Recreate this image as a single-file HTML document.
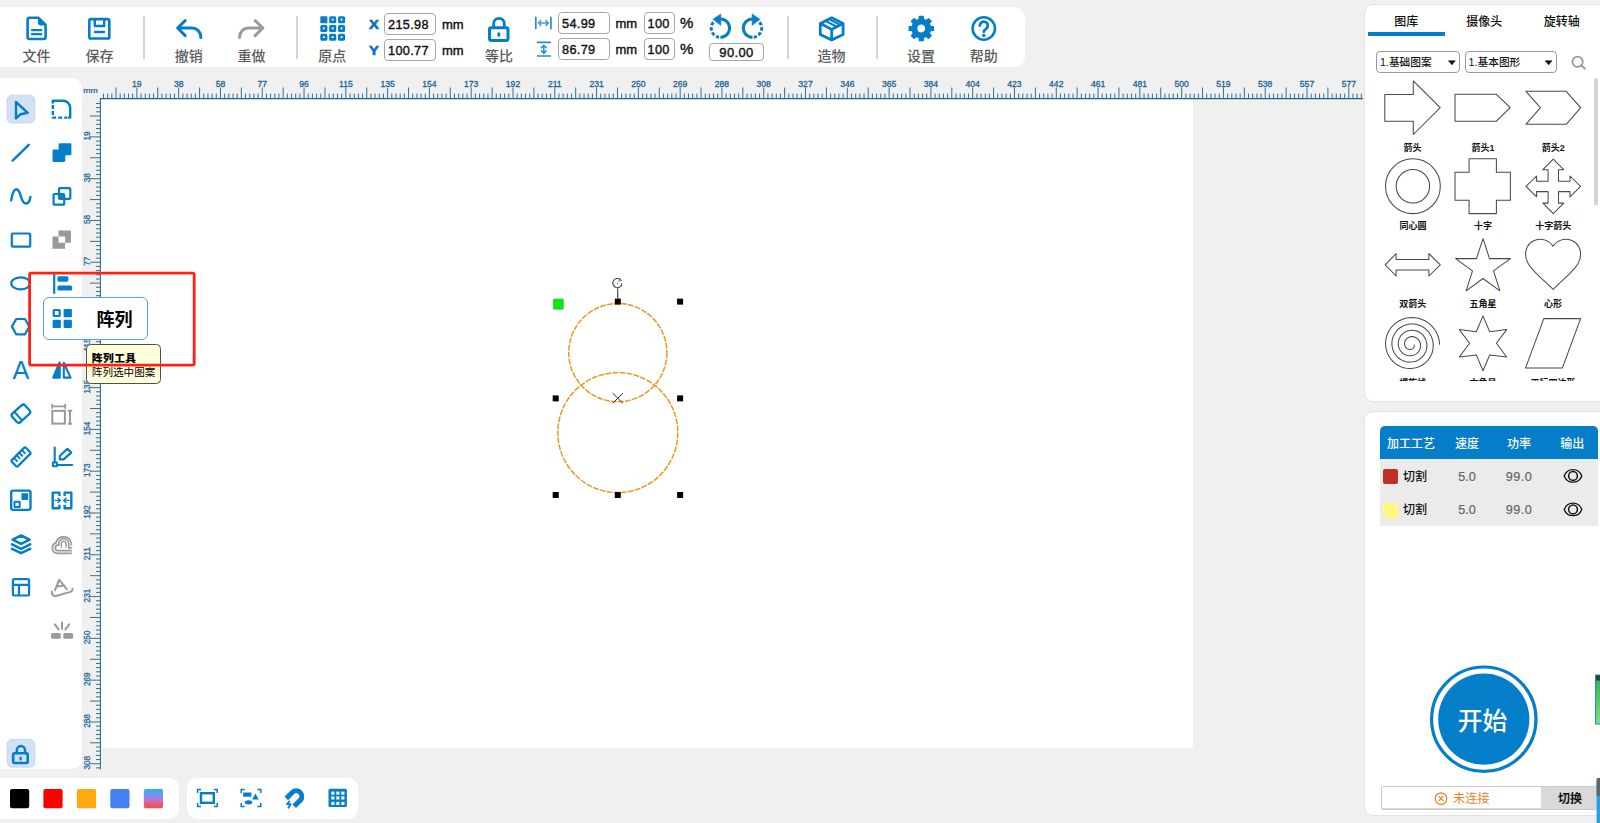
<!DOCTYPE html>
<html lang="zh"><head><meta charset="utf-8"><title>激光雕刻软件</title>
<style>
html,body{margin:0;padding:0}
body{width:1600px;height:823px;overflow:hidden;background:#f0f0f0;position:relative;
font-family:"Liberation Sans", "Noto Sans CJK SC", sans-serif;}
.b{position:absolute;box-sizing:border-box}
.t{position:absolute;white-space:nowrap;line-height:1;}
svg{position:absolute;left:0;top:0;overflow:visible}
.inp{position:absolute;box-sizing:border-box;background:#fff;border:1px solid #a6a6a6;border-radius:4px}
</style></head><body>
<div class="b" style="left:100px;top:99px;width:1093px;height:649px;background:#fff"></div><div class="b" style="left:0px;top:7px;width:1025px;height:60px;background:#fff;border-radius:0 10px 10px 0"></div><div class="b" style="left:0px;top:78px;width:82px;height:691px;background:#fff;border-radius:0 10px 10px 0"></div><div class="b" style="left:0px;top:778px;width:179px;height:41px;background:#fff;border-radius:0 10px 10px 0"></div><div class="b" style="left:187px;top:778px;width:171px;height:41px;background:#fff;border-radius:10px"></div><div class="b" style="left:1364px;top:4.4px;width:240px;height:397.8px;background:#fff;border-radius:9px 0 0 9px;border:1.5px solid #e3e3e3"></div><div class="b" style="left:1364px;top:411.4px;width:240px;height:405px;background:#fff;border-radius:9px 0 0 9px;border:1.5px solid #e3e3e3"></div><svg width="1600" height="823" viewBox="0 0 1600 823" font-family='"Liberation Sans", sans-serif'><path d="M100,98.6 H1363" stroke="#1c6390" stroke-width="1.1" fill="none"/><path d="M103.46,93.6V98M107.64,93.6V98M111.82,93.6V98M115.99,87.5V98M120.17,93.6V98M124.35,93.6V98M128.53,93.6V98M132.71,93.6V98M136.89,87.5V98M141.07,93.6V98M145.25,93.6V98M149.43,93.6V98M153.61,93.6V98M157.78,87.5V98M161.96,93.6V98M166.14,93.6V98M170.32,93.6V98M174.50,93.6V98M178.68,87.5V98M182.86,93.6V98M187.04,93.6V98M191.22,93.6V98M195.40,93.6V98M199.58,87.5V98M203.75,93.6V98M207.93,93.6V98M212.11,93.6V98M216.29,93.6V98M220.47,87.5V98M224.65,93.6V98M228.83,93.6V98M233.01,93.6V98M237.19,93.6V98M241.37,87.5V98M245.54,93.6V98M249.72,93.6V98M253.90,93.6V98M258.08,93.6V98M262.26,87.5V98M266.44,93.6V98M270.62,93.6V98M274.80,93.6V98M278.98,93.6V98M283.15,87.5V98M287.33,93.6V98M291.51,93.6V98M295.69,93.6V98M299.87,93.6V98M304.05,87.5V98M308.23,93.6V98M312.41,93.6V98M316.59,93.6V98M320.77,93.6V98M324.94,87.5V98M329.12,93.6V98M333.30,93.6V98M337.48,93.6V98M341.66,93.6V98M345.84,87.5V98M350.02,93.6V98M354.20,93.6V98M358.38,93.6V98M362.56,93.6V98M366.74,87.5V98M370.91,93.6V98M375.09,93.6V98M379.27,93.6V98M383.45,93.6V98M387.63,87.5V98M391.81,93.6V98M395.99,93.6V98M400.17,93.6V98M404.35,93.6V98M408.52,87.5V98M412.70,93.6V98M416.88,93.6V98M421.06,93.6V98M425.24,93.6V98M429.42,87.5V98M433.60,93.6V98M437.78,93.6V98M441.96,93.6V98M446.14,93.6V98M450.31,87.5V98M454.49,93.6V98M458.67,93.6V98M462.85,93.6V98M467.03,93.6V98M471.21,87.5V98M475.39,93.6V98M479.57,93.6V98M483.75,93.6V98M487.93,93.6V98M492.11,87.5V98M496.28,93.6V98M500.46,93.6V98M504.64,93.6V98M508.82,93.6V98M513.00,87.5V98M517.18,93.6V98M521.36,93.6V98M525.54,93.6V98M529.72,93.6V98M533.89,87.5V98M538.07,93.6V98M542.25,93.6V98M546.43,93.6V98M550.61,93.6V98M554.79,87.5V98M558.97,93.6V98M563.15,93.6V98M567.33,93.6V98M571.51,93.6V98M575.68,87.5V98M579.86,93.6V98M584.04,93.6V98M588.22,93.6V98M592.40,93.6V98M596.58,87.5V98M600.76,93.6V98M604.94,93.6V98M609.12,93.6V98M613.30,93.6V98M617.48,87.5V98M621.65,93.6V98M625.83,93.6V98M630.01,93.6V98M634.19,93.6V98M638.37,87.5V98M642.55,93.6V98M646.73,93.6V98M650.91,93.6V98M655.09,93.6V98M659.26,87.5V98M663.44,93.6V98M667.62,93.6V98M671.80,93.6V98M675.98,93.6V98M680.16,87.5V98M684.34,93.6V98M688.52,93.6V98M692.70,93.6V98M696.88,93.6V98M701.05,87.5V98M705.23,93.6V98M709.41,93.6V98M713.59,93.6V98M717.77,93.6V98M721.95,87.5V98M726.13,93.6V98M730.31,93.6V98M734.49,93.6V98M738.67,93.6V98M742.85,87.5V98M747.02,93.6V98M751.20,93.6V98M755.38,93.6V98M759.56,93.6V98M763.74,87.5V98M767.92,93.6V98M772.10,93.6V98M776.28,93.6V98M780.46,93.6V98M784.63,87.5V98M788.81,93.6V98M792.99,93.6V98M797.17,93.6V98M801.35,93.6V98M805.53,87.5V98M809.71,93.6V98M813.89,93.6V98M818.07,93.6V98M822.25,93.6V98M826.42,87.5V98M830.60,93.6V98M834.78,93.6V98M838.96,93.6V98M843.14,93.6V98M847.32,87.5V98M851.50,93.6V98M855.68,93.6V98M859.86,93.6V98M864.04,93.6V98M868.22,87.5V98M872.39,93.6V98M876.57,93.6V98M880.75,93.6V98M884.93,93.6V98M889.11,87.5V98M893.29,93.6V98M897.47,93.6V98M901.65,93.6V98M905.83,93.6V98M910.00,87.5V98M914.18,93.6V98M918.36,93.6V98M922.54,93.6V98M926.72,93.6V98M930.90,87.5V98M935.08,93.6V98M939.26,93.6V98M943.44,93.6V98M947.62,93.6V98M951.79,87.5V98M955.97,93.6V98M960.15,93.6V98M964.33,93.6V98M968.51,93.6V98M972.69,87.5V98M976.87,93.6V98M981.05,93.6V98M985.23,93.6V98M989.41,93.6V98M993.59,87.5V98M997.76,93.6V98M1001.94,93.6V98M1006.12,93.6V98M1010.30,93.6V98M1014.48,87.5V98M1018.66,93.6V98M1022.84,93.6V98M1027.02,93.6V98M1031.20,93.6V98M1035.38,87.5V98M1039.55,93.6V98M1043.73,93.6V98M1047.91,93.6V98M1052.09,93.6V98M1056.27,87.5V98M1060.45,93.6V98M1064.63,93.6V98M1068.81,93.6V98M1072.99,93.6V98M1077.16,87.5V98M1081.34,93.6V98M1085.52,93.6V98M1089.70,93.6V98M1093.88,93.6V98M1098.06,87.5V98M1102.24,93.6V98M1106.42,93.6V98M1110.60,93.6V98M1114.78,93.6V98M1118.95,87.5V98M1123.13,93.6V98M1127.31,93.6V98M1131.49,93.6V98M1135.67,93.6V98M1139.85,87.5V98M1144.03,93.6V98M1148.21,93.6V98M1152.39,93.6V98M1156.57,93.6V98M1160.74,87.5V98M1164.92,93.6V98M1169.10,93.6V98M1173.28,93.6V98M1177.46,93.6V98M1181.64,87.5V98M1185.82,93.6V98M1190.00,93.6V98M1194.18,93.6V98M1198.36,93.6V98M1202.53,87.5V98M1206.71,93.6V98M1210.89,93.6V98M1215.07,93.6V98M1219.25,93.6V98M1223.43,87.5V98M1227.61,93.6V98M1231.79,93.6V98M1235.97,93.6V98M1240.15,93.6V98M1244.32,87.5V98M1248.50,93.6V98M1252.68,93.6V98M1256.86,93.6V98M1261.04,93.6V98M1265.22,87.5V98M1269.40,93.6V98M1273.58,93.6V98M1277.76,93.6V98M1281.94,93.6V98M1286.11,87.5V98M1290.29,93.6V98M1294.47,93.6V98M1298.65,93.6V98M1302.83,93.6V98M1307.01,87.5V98M1311.19,93.6V98M1315.37,93.6V98M1319.55,93.6V98M1323.73,93.6V98M1327.90,87.5V98M1332.08,93.6V98M1336.26,93.6V98M1340.44,93.6V98M1344.62,93.6V98M1348.80,87.5V98M1352.98,93.6V98M1357.16,93.6V98M1361.34,93.6V98" stroke="#1c6390" stroke-width="0.9" fill="none"/><text x="136.89" y="87" font-size="8.6" fill="#1c6390" text-anchor="middle" stroke="#1c6390" stroke-width="0.3">19</text><text x="178.68" y="87" font-size="8.6" fill="#1c6390" text-anchor="middle" stroke="#1c6390" stroke-width="0.3">38</text><text x="220.47" y="87" font-size="8.6" fill="#1c6390" text-anchor="middle" stroke="#1c6390" stroke-width="0.3">58</text><text x="262.26" y="87" font-size="8.6" fill="#1c6390" text-anchor="middle" stroke="#1c6390" stroke-width="0.3">77</text><text x="304.05" y="87" font-size="8.6" fill="#1c6390" text-anchor="middle" stroke="#1c6390" stroke-width="0.3">96</text><text x="345.84" y="87" font-size="8.6" fill="#1c6390" text-anchor="middle" stroke="#1c6390" stroke-width="0.3">115</text><text x="387.63" y="87" font-size="8.6" fill="#1c6390" text-anchor="middle" stroke="#1c6390" stroke-width="0.3">135</text><text x="429.42" y="87" font-size="8.6" fill="#1c6390" text-anchor="middle" stroke="#1c6390" stroke-width="0.3">154</text><text x="471.21" y="87" font-size="8.6" fill="#1c6390" text-anchor="middle" stroke="#1c6390" stroke-width="0.3">173</text><text x="513.00" y="87" font-size="8.6" fill="#1c6390" text-anchor="middle" stroke="#1c6390" stroke-width="0.3">192</text><text x="554.79" y="87" font-size="8.6" fill="#1c6390" text-anchor="middle" stroke="#1c6390" stroke-width="0.3">211</text><text x="596.58" y="87" font-size="8.6" fill="#1c6390" text-anchor="middle" stroke="#1c6390" stroke-width="0.3">231</text><text x="638.37" y="87" font-size="8.6" fill="#1c6390" text-anchor="middle" stroke="#1c6390" stroke-width="0.3">250</text><text x="680.16" y="87" font-size="8.6" fill="#1c6390" text-anchor="middle" stroke="#1c6390" stroke-width="0.3">269</text><text x="721.95" y="87" font-size="8.6" fill="#1c6390" text-anchor="middle" stroke="#1c6390" stroke-width="0.3">288</text><text x="763.74" y="87" font-size="8.6" fill="#1c6390" text-anchor="middle" stroke="#1c6390" stroke-width="0.3">308</text><text x="805.53" y="87" font-size="8.6" fill="#1c6390" text-anchor="middle" stroke="#1c6390" stroke-width="0.3">327</text><text x="847.32" y="87" font-size="8.6" fill="#1c6390" text-anchor="middle" stroke="#1c6390" stroke-width="0.3">346</text><text x="889.11" y="87" font-size="8.6" fill="#1c6390" text-anchor="middle" stroke="#1c6390" stroke-width="0.3">365</text><text x="930.90" y="87" font-size="8.6" fill="#1c6390" text-anchor="middle" stroke="#1c6390" stroke-width="0.3">384</text><text x="972.69" y="87" font-size="8.6" fill="#1c6390" text-anchor="middle" stroke="#1c6390" stroke-width="0.3">404</text><text x="1014.48" y="87" font-size="8.6" fill="#1c6390" text-anchor="middle" stroke="#1c6390" stroke-width="0.3">423</text><text x="1056.27" y="87" font-size="8.6" fill="#1c6390" text-anchor="middle" stroke="#1c6390" stroke-width="0.3">442</text><text x="1098.06" y="87" font-size="8.6" fill="#1c6390" text-anchor="middle" stroke="#1c6390" stroke-width="0.3">461</text><text x="1139.85" y="87" font-size="8.6" fill="#1c6390" text-anchor="middle" stroke="#1c6390" stroke-width="0.3">481</text><text x="1181.64" y="87" font-size="8.6" fill="#1c6390" text-anchor="middle" stroke="#1c6390" stroke-width="0.3">500</text><text x="1223.43" y="87" font-size="8.6" fill="#1c6390" text-anchor="middle" stroke="#1c6390" stroke-width="0.3">519</text><text x="1265.22" y="87" font-size="8.6" fill="#1c6390" text-anchor="middle" stroke="#1c6390" stroke-width="0.3">538</text><text x="1307.01" y="87" font-size="8.6" fill="#1c6390" text-anchor="middle" stroke="#1c6390" stroke-width="0.3">557</text><text x="1348.80" y="87" font-size="8.6" fill="#1c6390" text-anchor="middle" stroke="#1c6390" stroke-width="0.3">577</text><text x="90.5" y="93.3" font-size="8" fill="#1c6390" text-anchor="middle" stroke="#1c6390" stroke-width="0.2" textLength="14.5" lengthAdjust="spacingAndGlyphs">mm</text><path d="M100.4,98 V769.5" stroke="#1c6390" stroke-width="1.0" fill="none"/><path d="M96,103.46H100M96,107.64H100M96,111.82H100M90,115.99H100M96,120.17H100M96,124.35H100M96,128.53H100M96,132.71H100M90,136.89H100M96,141.07H100M96,145.25H100M96,149.43H100M96,153.61H100M90,157.78H100M96,161.96H100M96,166.14H100M96,170.32H100M96,174.50H100M90,178.68H100M96,182.86H100M96,187.04H100M96,191.22H100M96,195.40H100M90,199.58H100M96,203.75H100M96,207.93H100M96,212.11H100M96,216.29H100M90,220.47H100M96,224.65H100M96,228.83H100M96,233.01H100M96,237.19H100M90,241.37H100M96,245.54H100M96,249.72H100M96,253.90H100M96,258.08H100M90,262.26H100M96,266.44H100M96,270.62H100M96,274.80H100M96,278.98H100M90,283.15H100M96,287.33H100M96,291.51H100M96,295.69H100M96,299.87H100M90,304.05H100M96,308.23H100M96,312.41H100M96,316.59H100M96,320.77H100M90,324.94H100M96,329.12H100M96,333.30H100M96,337.48H100M96,341.66H100M90,345.84H100M96,350.02H100M96,354.20H100M96,358.38H100M96,362.56H100M90,366.74H100M96,370.91H100M96,375.09H100M96,379.27H100M96,383.45H100M90,387.63H100M96,391.81H100M96,395.99H100M96,400.17H100M96,404.35H100M90,408.52H100M96,412.70H100M96,416.88H100M96,421.06H100M96,425.24H100M90,429.42H100M96,433.60H100M96,437.78H100M96,441.96H100M96,446.14H100M90,450.31H100M96,454.49H100M96,458.67H100M96,462.85H100M96,467.03H100M90,471.21H100M96,475.39H100M96,479.57H100M96,483.75H100M96,487.93H100M90,492.11H100M96,496.28H100M96,500.46H100M96,504.64H100M96,508.82H100M90,513.00H100M96,517.18H100M96,521.36H100M96,525.54H100M96,529.72H100M90,533.89H100M96,538.07H100M96,542.25H100M96,546.43H100M96,550.61H100M90,554.79H100M96,558.97H100M96,563.15H100M96,567.33H100M96,571.51H100M90,575.68H100M96,579.86H100M96,584.04H100M96,588.22H100M96,592.40H100M90,596.58H100M96,600.76H100M96,604.94H100M96,609.12H100M96,613.30H100M90,617.48H100M96,621.65H100M96,625.83H100M96,630.01H100M96,634.19H100M90,638.37H100M96,642.55H100M96,646.73H100M96,650.91H100M96,655.09H100M90,659.26H100M96,663.44H100M96,667.62H100M96,671.80H100M96,675.98H100M90,680.16H100M96,684.34H100M96,688.52H100M96,692.70H100M96,696.88H100M90,701.05H100M96,705.23H100M96,709.41H100M96,713.59H100M96,717.77H100M90,721.95H100M96,726.13H100M96,730.31H100M96,734.49H100M96,738.67H100M90,742.85H100M96,747.02H100M96,751.20H100M96,755.38H100M96,759.56H100M90,763.74H100M96,767.92H100" stroke="#1c6390" stroke-width="0.9" fill="none"/><text transform="translate(89.9,135.89) rotate(-90)" font-size="8.2" fill="#1c6390" text-anchor="middle" stroke="#1c6390" stroke-width="0.25">19</text><text transform="translate(89.9,177.68) rotate(-90)" font-size="8.2" fill="#1c6390" text-anchor="middle" stroke="#1c6390" stroke-width="0.25">38</text><text transform="translate(89.9,219.47) rotate(-90)" font-size="8.2" fill="#1c6390" text-anchor="middle" stroke="#1c6390" stroke-width="0.25">58</text><text transform="translate(89.9,261.26) rotate(-90)" font-size="8.2" fill="#1c6390" text-anchor="middle" stroke="#1c6390" stroke-width="0.25">77</text><text transform="translate(89.9,303.05) rotate(-90)" font-size="8.2" fill="#1c6390" text-anchor="middle" stroke="#1c6390" stroke-width="0.25">96</text><text transform="translate(89.9,344.84) rotate(-90)" font-size="8.2" fill="#1c6390" text-anchor="middle" stroke="#1c6390" stroke-width="0.25">115</text><text transform="translate(89.9,386.63) rotate(-90)" font-size="8.2" fill="#1c6390" text-anchor="middle" stroke="#1c6390" stroke-width="0.25">135</text><text transform="translate(89.9,428.42) rotate(-90)" font-size="8.2" fill="#1c6390" text-anchor="middle" stroke="#1c6390" stroke-width="0.25">154</text><text transform="translate(89.9,470.21) rotate(-90)" font-size="8.2" fill="#1c6390" text-anchor="middle" stroke="#1c6390" stroke-width="0.25">173</text><text transform="translate(89.9,512.00) rotate(-90)" font-size="8.2" fill="#1c6390" text-anchor="middle" stroke="#1c6390" stroke-width="0.25">192</text><text transform="translate(89.9,553.79) rotate(-90)" font-size="8.2" fill="#1c6390" text-anchor="middle" stroke="#1c6390" stroke-width="0.25">211</text><text transform="translate(89.9,595.58) rotate(-90)" font-size="8.2" fill="#1c6390" text-anchor="middle" stroke="#1c6390" stroke-width="0.25">231</text><text transform="translate(89.9,637.37) rotate(-90)" font-size="8.2" fill="#1c6390" text-anchor="middle" stroke="#1c6390" stroke-width="0.25">250</text><text transform="translate(89.9,679.16) rotate(-90)" font-size="8.2" fill="#1c6390" text-anchor="middle" stroke="#1c6390" stroke-width="0.25">269</text><text transform="translate(89.9,720.95) rotate(-90)" font-size="8.2" fill="#1c6390" text-anchor="middle" stroke="#1c6390" stroke-width="0.25">288</text><text transform="translate(89.9,762.74) rotate(-90)" font-size="8.2" fill="#1c6390" text-anchor="middle" stroke="#1c6390" stroke-width="0.25">308</text></svg><svg width="1600" height="823" viewBox="0 0 1600 823"><circle cx="617.8" cy="352.6" r="49.1" fill="none" stroke="#f0961e" stroke-width="1.5" stroke-dasharray="5.8 1.3"/><circle cx="617.8" cy="432.6" r="60" fill="none" stroke="#f0961e" stroke-width="1.5" stroke-dasharray="5.8 1.3"/><rect x="552.7" y="395.4" width="6" height="6" fill="#000"/><rect x="552.7" y="492.0" width="6" height="6" fill="#000"/><rect x="614.8" y="298.6" width="6" height="6" fill="#000"/><rect x="614.8" y="492.0" width="6" height="6" fill="#000"/><rect x="677.1" y="298.6" width="6" height="6" fill="#000"/><rect x="677.1" y="395.4" width="6" height="6" fill="#000"/><rect x="677.1" y="492.0" width="6" height="6" fill="#000"/><rect x="553.2" y="299" width="10.2" height="10.2" fill="#00ee00" stroke="#7f9f7f" stroke-width="0.8" rx="1"/><path d="M612.6,393 L623,403.4 M623,393 L612.6,403.4" stroke="#333" stroke-width="1" fill="none"/><path d="M617.7,288.4 V298.6" stroke="#444" stroke-width="1.2" fill="none"/><path d="M620.6,279.8 A4.6,4.6 0 1 0 622,283.4" stroke="#444" stroke-width="1.1" fill="none"/><path d="M619.2,278 L621.6,280.6 L618.2,281.2" stroke="#444" stroke-width="0.8" fill="none"/><circle cx="617.4" cy="283.6" r="0.6" fill="#444"/></svg><div class="t" style="left:36.6px;top:55.8px;font-size:14px;color:#5c5c5c;font-weight:500;transform:translate(-50%,-50%);">文件</div><div class="t" style="left:99.6px;top:55.8px;font-size:14px;color:#5c5c5c;font-weight:500;transform:translate(-50%,-50%);">保存</div><div class="t" style="left:188.8px;top:55.8px;font-size:14px;color:#5c5c5c;font-weight:500;transform:translate(-50%,-50%);">撤销</div><div class="t" style="left:251.6px;top:55.8px;font-size:14px;color:#5c5c5c;font-weight:500;transform:translate(-50%,-50%);">重做</div><div class="t" style="left:332.2px;top:55.8px;font-size:14px;color:#5c5c5c;font-weight:500;transform:translate(-50%,-50%);">原点</div><div class="t" style="left:499px;top:55.8px;font-size:14px;color:#5c5c5c;font-weight:500;transform:translate(-50%,-50%);">等比</div><div class="t" style="left:831.6px;top:55.8px;font-size:14px;color:#5c5c5c;font-weight:500;transform:translate(-50%,-50%);">造物</div><div class="t" style="left:921px;top:55.8px;font-size:14px;color:#5c5c5c;font-weight:500;transform:translate(-50%,-50%);">设置</div><div class="t" style="left:983.7px;top:55.8px;font-size:14px;color:#5c5c5c;font-weight:500;transform:translate(-50%,-50%);">帮助</div><div class="b" style="left:143.4px;top:16px;width:2px;height:43px;background:#d6d6d6"></div><div class="b" style="left:296px;top:16px;width:2px;height:43px;background:#d6d6d6"></div><div class="b" style="left:786.6px;top:16px;width:2px;height:43px;background:#d6d6d6"></div><div class="b" style="left:875.9px;top:16px;width:2px;height:43px;background:#d6d6d6"></div><div class="inp" style="left:384px;top:13px;width:52px;height:22px;padding-left:3px;font-size:12.7px;line-height:22px;color:#111;-webkit-text-stroke:0.4px #111;letter-spacing:0.35px">215.98</div><div class="inp" style="left:384px;top:39px;width:52px;height:22px;padding-left:3px;font-size:12.7px;line-height:22px;color:#111;-webkit-text-stroke:0.4px #111;letter-spacing:0.35px">100.77</div><div class="inp" style="left:558px;top:12px;width:52px;height:22px;padding-left:3px;font-size:12.7px;line-height:22px;color:#111;-webkit-text-stroke:0.4px #111;letter-spacing:0.35px">54.99</div><div class="inp" style="left:558px;top:38px;width:52px;height:22px;padding-left:3px;font-size:12.7px;line-height:22px;color:#111;-webkit-text-stroke:0.4px #111;letter-spacing:0.35px">86.79</div><div class="inp" style="left:643.5px;top:12px;width:31px;height:22px;padding-left:3px;font-size:12.7px;line-height:22px;color:#111;-webkit-text-stroke:0.4px #111;letter-spacing:0.35px">100</div><div class="inp" style="left:643.5px;top:38px;width:31px;height:22px;padding-left:3px;font-size:12.7px;line-height:22px;color:#111;-webkit-text-stroke:0.4px #111;letter-spacing:0.35px">100</div><div class="inp" style="left:709px;top:42.5px;width:55px;height:18.5px;text-align:center;font-size:13px;line-height:18.5px;color:#111;-webkit-text-stroke:0.4px #111;letter-spacing:0.35px">90.00</div><div class="t" style="left:374.2px;top:25.2px;font-size:13.2px;color:#0a70c2;font-weight:700;transform:translate(-50%,-50%);-webkit-text-stroke:0.6px #0a70c2;transform:translate(-50%,-50%) scaleX(1.12)">X</div><div class="t" style="left:374.2px;top:51.2px;font-size:13.2px;color:#0a70c2;font-weight:700;transform:translate(-50%,-50%);-webkit-text-stroke:0.6px #0a70c2;transform:translate(-50%,-50%) scaleX(1.12)">Y</div><div class="t" style="left:442px;top:23.5px;font-size:13px;color:#111;font-weight:400;transform:translate(0,-50%);-webkit-text-stroke:0.4px #111">mm</div><div class="t" style="left:442px;top:49.5px;font-size:13px;color:#111;font-weight:400;transform:translate(0,-50%);-webkit-text-stroke:0.4px #111">mm</div><div class="t" style="left:615.5px;top:22.5px;font-size:13px;color:#111;font-weight:400;transform:translate(0,-50%);-webkit-text-stroke:0.4px #111">mm</div><div class="t" style="left:680px;top:22.0px;font-size:15px;color:#111;font-weight:400;transform:translate(0,-50%);-webkit-text-stroke:0.4px #111">%</div><div class="t" style="left:615.5px;top:48.5px;font-size:13px;color:#111;font-weight:400;transform:translate(0,-50%);-webkit-text-stroke:0.4px #111">mm</div><div class="t" style="left:680px;top:48.0px;font-size:15px;color:#111;font-weight:400;transform:translate(0,-50%);-webkit-text-stroke:0.4px #111">%</div><svg width="1600" height="823" viewBox="0 0 1600 823" fill="none" stroke-linecap="round" stroke-linejoin="round"><path d="M29.6,17.8 H38.6 L45.6,24.8 V37 a2,2 0 0 1 -2,2 H29.6 a2,2 0 0 1 -2,-2 V19.8 a2,2 0 0 1 2,-2 Z" stroke="#057ec9" stroke-width="2.6"/><path d="M38.4,18 V23 a2,2 0 0 0 2,2 H45.4 Z" fill="#057ec9" stroke="#057ec9" stroke-width="1"/><path d="M32,30.1 H41.2 M32,34.1 H41.2" stroke="#057ec9" stroke-width="2.4"/><rect x="89.3" y="19.1" width="20" height="19.4" rx="1.6" stroke="#057ec9" stroke-width="2.6"/><path d="M94.8,19.5 V26 H104.2 V19.5" stroke="#057ec9" stroke-width="2.4" stroke-linecap="butt"/><path d="M95,32 H104" stroke="#057ec9" stroke-width="2.4"/><path d="M185.2,20.6 L177.6,28 L185.2,35.6 M178.4,28 H192 a8.8,8.8 0 0 1 8.8,8.8 V37.6" stroke="#057ec9" stroke-width="3"/><path d="M255.2,20.6 L262.8,28 L255.2,35.6 M262,28 H248.4 a8.8,8.8 0 0 0 -8.8,8.8 V37.6" stroke="#9a9a9a" stroke-width="3"/><rect x="320.30" y="16.20" width="7.1" height="7" rx="0.9" fill="#057ec9"/><rect x="321.60" y="26.25" width="4.5" height="4.4" rx="0.2" stroke="#057ec9" stroke-width="2.6" stroke-linejoin="miter"/><rect x="321.60" y="35.00" width="4.5" height="4.4" rx="0.2" stroke="#057ec9" stroke-width="2.6" stroke-linejoin="miter"/><rect x="330.45" y="17.50" width="4.5" height="4.4" rx="0.2" stroke="#057ec9" stroke-width="2.6" stroke-linejoin="miter"/><rect x="330.45" y="26.25" width="4.5" height="4.4" rx="0.2" stroke="#057ec9" stroke-width="2.6" stroke-linejoin="miter"/><rect x="330.45" y="35.00" width="4.5" height="4.4" rx="0.2" stroke="#057ec9" stroke-width="2.6" stroke-linejoin="miter"/><rect x="339.30" y="17.50" width="4.5" height="4.4" rx="0.2" stroke="#057ec9" stroke-width="2.6" stroke-linejoin="miter"/><rect x="339.30" y="26.25" width="4.5" height="4.4" rx="0.2" stroke="#057ec9" stroke-width="2.6" stroke-linejoin="miter"/><rect x="339.30" y="35.00" width="4.5" height="4.4" rx="0.2" stroke="#057ec9" stroke-width="2.6" stroke-linejoin="miter"/><rect x="489.5" y="27.7" width="18.5" height="12.7" rx="1.6" stroke="#057ec9" stroke-width="3"/><path d="M493.7,27.4 V23.6 a5.3,5.3 0 0 1 10.6,0 V27.4" stroke="#057ec9" stroke-width="2.8"/><path d="M498.8,33.6 V35.6" stroke="#057ec9" stroke-width="2.8"/><path d="M535.8,17.4 V28.6 M550.9,17.4 V28.6" stroke="#2a8bd2" stroke-width="1.7"/><path d="M538.6,23 H548.2 M540.8,20.6 L538.4,23 L540.8,25.4 M546,20.6 L548.4,23 L546,25.4" stroke="#4a9bd8" stroke-width="1.5"/><path d="M537.4,42.4 H550.4 M537.4,56 H550.4" stroke="#2a8bd2" stroke-width="1.6"/><path d="M543.8,45.4 V53.2 M541.4,47.8 L543.8,45.2 L546.2,47.8 M541.4,50.8 L543.8,53.4 L546.2,50.8" stroke="#2a8bd2" stroke-width="1.5"/><path d="M720.4,18.900000000000002 A9.2,9.2 0 0 1 720.4,37.3" stroke="#057ec9" stroke-width="3" stroke-linecap="butt"/><path d="M719.12,37.21 A9.2,9.2 0 0 1 716.08,36.22" stroke="#057ec9" stroke-width="3" stroke-linecap="butt"/><path d="M714.49,35.15 A9.2,9.2 0 0 1 712.28,32.42" stroke="#057ec9" stroke-width="3" stroke-linecap="butt"/><path d="M711.56,30.64 A9.2,9.2 0 0 1 711.25,27.14" stroke="#057ec9" stroke-width="3" stroke-linecap="butt"/><path d="M711.65,25.26 A9.2,9.2 0 0 1 713.35,22.19" stroke="#057ec9" stroke-width="3" stroke-linecap="butt"/><path d="M713.00,19.3 L720.80,13.9 L720.80,25.2 Z" fill="#057ec9" stroke="#057ec9" stroke-width="0.6"/><path d="M752.5,18.900000000000002 A9.2,9.2 0 0 0 752.5,37.3" stroke="#057ec9" stroke-width="3" stroke-linecap="butt"/><path d="M753.78,37.21 A9.2,9.2 0 0 0 756.82,36.22" stroke="#057ec9" stroke-width="3" stroke-linecap="butt"/><path d="M758.41,35.15 A9.2,9.2 0 0 0 760.62,32.42" stroke="#057ec9" stroke-width="3" stroke-linecap="butt"/><path d="M761.34,30.64 A9.2,9.2 0 0 0 761.65,27.14" stroke="#057ec9" stroke-width="3" stroke-linecap="butt"/><path d="M761.25,25.26 A9.2,9.2 0 0 0 759.55,22.19" stroke="#057ec9" stroke-width="3" stroke-linecap="butt"/><path d="M759.90,19.3 L752.10,13.9 L752.10,25.2 Z" fill="#057ec9" stroke="#057ec9" stroke-width="0.6"/><path d="M831.7,17.8 L843.1,23.4 V34.4 L831.7,40 L820.3,34.4 V23.4 Z M820.6,23.6 L831.7,29.4 L842.8,23.6 M831.7,29.4 V39.6" stroke="#057ec9" stroke-width="2.8"/><path d="M826.4,21.4 L837.2,27 M829.8,19.6 L840.4,25.2" stroke="#057ec9" stroke-width="2"/><path d="M930.42,26.23 L933.46,26.62 L933.46,30.38 L930.42,30.77 L929.36,33.34 L931.23,35.76 L928.56,38.43 L926.14,36.56 L923.57,37.62 L923.18,40.66 L919.42,40.66 L919.03,37.62 L916.46,36.56 L914.04,38.43 L911.37,35.76 L913.24,33.34 L912.18,30.77 L909.14,30.38 L909.14,26.62 L912.18,26.23 L913.24,23.66 L911.37,21.24 L914.04,18.57 L916.46,20.44 L919.03,19.38 L919.42,16.34 L923.18,16.34 L923.57,19.38 L926.14,20.44 L928.56,18.57 L931.23,21.24 L929.36,23.66Z M925.8,28.5 a4.5,4.5 0 1 0 -9.0,0 a4.5,4.5 0 1 0 9.0,0Z" fill="#057ec9" fill-rule="evenodd" stroke="#057ec9" stroke-width="1.2"/><circle cx="983.8" cy="28.5" r="11.2" stroke="#057ec9" stroke-width="2.6"/><path d="M979.8,25.6 a4,4 0 1 1 6.4,3.2 c-1.6,1.1 -2.4,1.6 -2.4,3" stroke="#057ec9" stroke-width="2.8"/><circle cx="983.8" cy="35.6" r="1.75" fill="#057ec9"/></svg><svg width="1600" height="823" viewBox="0 0 1600 823" fill="none" stroke-linecap="round" stroke-linejoin="round"><rect x="7" y="95.2" width="27.8" height="27.8" rx="5" fill="#d2e1f3" stroke="#c4d7ee" stroke-width="1"/><rect x="7" y="739.4" width="27.8" height="27.8" rx="5" fill="#d2e1f3" stroke="#c4d7ee" stroke-width="1"/><path d="M16,102 L27.8,112.8 L20.6,114.2 L16,118.4 Z" stroke="#057ec9" stroke-width="2.4"/><path d="M52.8,102.6 V100.8 H63 a7.2,7.2 0 0 1 7.2,7.2 V117.6 H68.6" stroke="#057ec9" stroke-width="2.4"/><path d="M52.8,105 V117.6 H67" stroke="#057ec9" stroke-width="2.4" stroke-dasharray="4 2" stroke-linecap="butt"/><path d="M12.6,160.6 L28.8,144.8" stroke="#057ec9" stroke-width="2.4"/><rect x="58.6" y="143.3" width="12.8" height="12" rx="1.4" fill="#057ec9"/><rect x="52.5" y="149.6" width="12.8" height="12.4" rx="1.4" fill="#057ec9"/><path d="M11.2,200.4 C12.4,192.6 14,189.2 16.4,189.2 C19.4,189.2 20.2,194.4 21,196.8 C21.9,199.6 23.2,203.5 26,203.5 C28.6,203.5 29.9,200.2 30.4,197" stroke="#057ec9" stroke-width="2.4"/><rect x="59" y="188.1" width="11.3" height="10.7" rx="0.8" stroke="#057ec9" stroke-width="2.2"/><rect x="53.6" y="194" width="10.6" height="10.7" rx="0.8" stroke="#057ec9" stroke-width="2.2"/><rect x="59.6" y="194.4" width="4.4" height="4.2" fill="#057ec9"/><rect x="11.8" y="233.5" width="18.4" height="13.2" rx="1" stroke="#057ec9" stroke-width="2.2"/><path d="M58.5,230.6 H70.9 V242.8 H58.5 Z M52.5,236.6 H65.1 V248.8 H52.5 Z" fill="#9a9a9a" fill-rule="evenodd"/><ellipse cx="20.7" cy="283.4" rx="9.4" ry="6" stroke="#057ec9" stroke-width="2.2"/><path d="M54.2,275.2 V293" stroke="#057ec9" stroke-width="2.2"/><rect x="57.4" y="276.2" width="11" height="5.5" rx="1.6" fill="#057ec9"/><rect x="57.4" y="285.4" width="14.8" height="5.2" rx="1.6" fill="#057ec9"/><path d="M11.9,326.6 L16.2,319 H25 L29.3,326.6 L25,334.3 H16.2 Z" stroke="#057ec9" stroke-width="2.2"/><path d="M59.5,362.9 V377.4 H53.5 Z" fill="#057ec9" stroke="#057ec9" stroke-width="2.6"/><path d="M63.8,362.8 V377.6 H70.6 Z" stroke="#057ec9" stroke-width="2.1"/><g transform="translate(20.9,413.7) rotate(-42)"><rect x="-8.6" y="-5.8" width="17.2" height="11.6" rx="2.6" stroke="#057ec9" stroke-width="2.3"/><path d="M-3.6,-5.4 V5.4" stroke="#057ec9" stroke-width="2.1"/></g><rect x="52.3" y="410.9" width="12.6" height="12.7" stroke="#9a9a9a" stroke-width="2" stroke-linejoin="miter"/><path d="M52,406.4 H65.4 M52.2,404 V408.8 M65.2,404 V408.8 M70,410.6 V424 M67.9,410.8 H72.2 M67.9,423.8 H72.2" stroke="#9a9a9a" stroke-width="1.9" stroke-linecap="butt"/><g transform="translate(21,457) rotate(-45)"><rect x="-9.9" y="-4.3" width="19.8" height="8.6" rx="1.2" stroke="#057ec9" stroke-width="2.3"/><path d="M-5.6,-4 V0 M-1.9,-4 V0 M1.8,-4 V0 M5.5,-4 V0" stroke="#057ec9" stroke-width="1.9"/></g><path d="M54.7,447.6 V462 M57.4,465 H72.2" stroke="#057ec9" stroke-width="2.1"/><rect x="52.9" y="462.4" width="4" height="3.8" stroke="#057ec9" stroke-width="2"/><path d="M59.8,459.4 V456 L67.4,448.8 L71.2,452.6 L63.6,459.4 Z" stroke="#057ec9" stroke-width="2.2"/><rect x="11.2" y="490.6" width="19.3" height="19.3" rx="1.8" stroke="#057ec9" stroke-width="2.4"/><rect x="21.4" y="493.2" width="6.8" height="6.7" rx="0.8" fill="#057ec9"/><rect x="14.5" y="501.8" width="5.2" height="5.3" rx="0.4" stroke="#057ec9" stroke-width="2"/><path d="M59.4,496 V492.6 H52.7 V508.2 H59.4 V504.8 M64.6,496 V492.6 H71.3 V508.2 H64.6 V504.8" stroke="#057ec9" stroke-width="2.4" stroke-linecap="butt" stroke-linejoin="round"/><path d="M55,500.4 H60.2 M58,498.2 L60.4,500.4 L58,502.6 M69,500.4 H63.8 M66,498.2 L63.6,500.4 L66,502.6" stroke="#057ec9" stroke-width="1.4"/><path d="M21.1,535.5 L29.6,539.7 L21.1,543.9 L12.6,539.7 Z" stroke="#057ec9" stroke-width="2.6"/><path d="M12,544.4 L21.1,548.8 L30.2,544.4 M12,548.8 L21.1,553.2 L30.2,548.8" stroke="#057ec9" stroke-width="2.6"/><path d="M71.8,553.4 H57.8 a5.4,5.4 0 0 1 -1.8,-10.5 a7.8,7.8 0 0 1 15.4,0.6 V545.6" stroke="#9a9a9a" stroke-width="1.7" stroke-linecap="butt"/><path d="M71.8,550.6 H58.2 a2.7,2.7 0 0 1 -0.4,-5.4 h1.0 v-1.6 a5,5 0 0 1 10,0.2 V547.8 H71.8" stroke="#9a9a9a" stroke-width="1.7" stroke-linecap="butt"/><path d="M61.4,547.8 V543.6 a2.3,2.3 0 0 1 4.6,0 V547.8" stroke="#9a9a9a" stroke-width="1.4" stroke-linecap="butt"/><rect x="12.9" y="579.1" width="16.2" height="16.4" rx="1.4" stroke="#057ec9" stroke-width="2.2"/><path d="M13,584.9 H29 M18.9,585 V595.4" stroke="#057ec9" stroke-width="2.2" stroke-linecap="butt"/><path d="M55,590.2 L59.2,579.8 L66.8,589.2 M56.6,586.6 L64.2,585.4" stroke="#9a9a9a" stroke-width="2"/><path d="M52,591.6 c-0.8,3 1.6,5 4.8,4.2 L68.6,592.4 c2.6,-0.6 4.4,-1.4 3.8,-3.8" stroke="#9a9a9a" stroke-width="2"/><rect x="51" y="633" width="9.8" height="5.8" rx="1.6" fill="#9a9a9a"/><rect x="63.3" y="633" width="9.8" height="5.8" rx="1.6" fill="#9a9a9a"/><path d="M62,622.4 V629 M54.8,624.4 L58.6,629.4 M69.2,624.4 L65.4,629.4" stroke="#9a9a9a" stroke-width="2"/><rect x="13.2" y="753.3" width="14.5" height="9.7" rx="1.2" stroke="#057ec9" stroke-width="2.6"/><path d="M16.8,753 V750.2 a4.1,4.1 0 0 1 8.2,0 V753" stroke="#057ec9" stroke-width="2.5"/><path d="M20.6,757.6 V759.6" stroke="#057ec9" stroke-width="2.3"/><rect x="10" y="789" width="19.2" height="19.2" rx="2" fill="#000"/><rect x="43.4" y="789" width="19.2" height="19.2" rx="2" fill="#ff0000"/><rect x="76.9" y="789" width="19.2" height="19.2" rx="2" fill="#ffa90f"/><rect x="110.3" y="789" width="19.2" height="19.2" rx="2" fill="#4780f0"/><defs><linearGradient id="gr" x1="0" y1="0" x2="0" y2="1"><stop offset="0" stop-color="#22b8e8"/><stop offset="0.5" stop-color="#a67ce8"/><stop offset="0.8" stop-color="#f0566a"/><stop offset="1" stop-color="#f44e52"/></linearGradient></defs><rect x="143.8" y="789" width="19.2" height="19.2" rx="2" fill="url(#gr)"/><path d="M197.6,792.9 V789.5 H201.0 M213.79999999999998,789.5 H217.2 V792.9 M217.2,803.0 V806.4 H213.79999999999998 M201.0,806.4 H197.6 V803.0" stroke="#057ec9" stroke-width="1.5" stroke-linecap="butt" stroke-linejoin="miter"/><rect x="201" y="793.2" width="12.8" height="9.6" stroke="#057ec9" stroke-width="2.4" stroke-linejoin="miter"/><path d="M241.2,792.9 V789.5 H244.6 M257.40000000000003,789.5 H260.8 V792.9 M260.8,803.0 V806.4 H257.40000000000003 M244.6,806.4 H241.2 V803.0" stroke="#057ec9" stroke-width="1.5" stroke-linecap="butt" stroke-linejoin="miter"/><rect x="243.2" y="792.5" width="8.2" height="4.2" fill="#057ec9"/><path d="M255.4,793.6 L258.8,799.6 H252.2 Z" fill="#057ec9"/><ellipse cx="248.5" cy="802.3" rx="3.7" ry="2.1" fill="#057ec9"/><g transform="translate(296.2,796.4) rotate(45)"><path d="M-5.6,8.4 V0 a5.6,5.6 0 0 1 11.2,0 V8.4" stroke="#057ec9" stroke-width="5" stroke-linecap="butt" stroke-linejoin="round"/></g><path d="M289.2,801.4 L287,804.2 H290.6 L288.4,807.8" stroke="#057ec9" stroke-width="1.8"/><rect x="328.5" y="788.8" width="18.4" height="18.2" rx="1.6" fill="#057ec9"/><rect x="331.3" y="791.6" width="3.1" height="3.1" fill="#fff"/><rect x="331.3" y="796.4" width="3.1" height="3.1" fill="#fff"/><rect x="331.3" y="801.9" width="3.1" height="3.1" fill="#fff"/><rect x="336.3" y="791.6" width="3.1" height="3.1" fill="#fff"/><rect x="336.3" y="796.4" width="3.1" height="3.1" fill="#fff"/><rect x="336.3" y="801.9" width="3.1" height="3.1" fill="#fff"/><rect x="341.3" y="791.6" width="3.1" height="3.1" fill="#fff"/><rect x="341.3" y="796.4" width="3.1" height="3.1" fill="#fff"/><rect x="341.3" y="801.9" width="3.1" height="3.1" fill="#fff"/></svg><div class="t" style="left:21px;top:370.6px;font-size:25.2px;color:#057ec9;font-weight:400;transform:translate(-50%,-50%);">A</div><div class="b" style="left:42.7px;top:297.4px;width:105px;height:42.6px;background:#fff;border:1px solid #58a6dc;border-radius:6px"></div><svg width="1600" height="823" viewBox="0 0 1600 823" fill="none"><rect x="53.7" y="310" width="6" height="6" rx="0.6" stroke="#057ec9" stroke-width="2.2"/><rect x="63.6" y="308.9" width="8.3" height="8.3" rx="1" fill="#057ec9"/><rect x="52.6" y="319.8" width="8.3" height="8.3" rx="1" fill="#057ec9"/><rect x="63.6" y="319.8" width="8.3" height="8.3" rx="1" fill="#057ec9"/></svg><div class="t" style="left:114.4px;top:319.6px;font-size:18px;color:#000;font-weight:700;transform:translate(-50%,-50%);">阵列</div><div class="b" style="left:86.4px;top:344.3px;width:74.8px;height:39.8px;background:#ffffdc;border:1px solid #505050;border-radius:4.5px"></div><div class="t" style="left:91.8px;top:357.6px;font-size:10.7px;color:#000;font-weight:900;transform:translate(0,-50%);letter-spacing:0.5px">阵列工具</div><div class="t" style="left:91.8px;top:372.4px;font-size:10.6px;color:#000;font-weight:400;transform:translate(0,-50%);">阵列选中图案</div><svg width="1600" height="823" viewBox="0 0 1600 823" fill="none"><rect x="29.6" y="273.2" width="164.6" height="91.9" rx="1.6" stroke="#ff2214" stroke-width="2.8"/></svg><div class="t" style="left:1406.2px;top:22px;font-size:12px;color:#111;font-weight:500;transform:translate(-50%,-50%);">图库</div><div class="t" style="left:1484.2px;top:22px;font-size:12px;color:#111;font-weight:500;transform:translate(-50%,-50%);">摄像头</div><div class="t" style="left:1561.8px;top:22px;font-size:12px;color:#111;font-weight:500;transform:translate(-50%,-50%);">旋转轴</div><div class="b" style="left:1367.8px;top:32.3px;width:77.5px;height:3.6px;background:#057ec9"></div><div class="b" style="left:1376.2px;top:51px;width:83.6px;height:22px;background:#fff;border:1px solid #9a9a9a;border-radius:4px"></div><div class="b" style="left:1464.7px;top:51px;width:92.2px;height:22px;background:#fff;border:1px solid #9a9a9a;border-radius:4px"></div><div class="t" style="left:1380px;top:62.3px;font-size:10.7px;color:#111;font-weight:500;transform:translate(0,-50%);">1.基础图案</div><div class="t" style="left:1468.6px;top:62.3px;font-size:10.7px;color:#111;font-weight:500;transform:translate(0,-50%);">1.基本图形</div><svg width="1600" height="823" viewBox="0 0 1600 823" fill="none" stroke-linejoin="round"><path d="M1448.5,60.8 H1455.3 L1451.9,64.8 Z" fill="#111" stroke="#111" stroke-width="0.6"/><path d="M1545.2,60.8 H1552 L1548.6,64.8 Z" fill="#111" stroke="#111" stroke-width="0.6"/><circle cx="1577.6" cy="61.8" r="5.2" stroke="#9a9a9a" stroke-width="1.8"/><path d="M1581.4,65.6 L1584.8,68.6" stroke="#9a9a9a" stroke-width="2" stroke-linecap="round"/><rect x="1594" y="78" width="4" height="127.5" rx="2" fill="#d4d4d4"/><path d="M1384.8,94.4 H1413.3 V80.8 L1440.2,107.7 L1413.3,134.5 V121.2 H1384.8 Z" stroke="#4a4a4a" stroke-width="1.05"/><path d="M1455,94.3 H1496.4 L1510.2,107.7 L1496.4,121.2 H1455 Z" stroke="#4a4a4a" stroke-width="1.05"/><path d="M1525.9,91.3 H1566.2 L1580.7,107.7 L1566.2,124.3 H1525.9 L1540.4,107.7 Z" stroke="#4a4a4a" stroke-width="1.05"/><circle cx="1412.9" cy="186.2" r="27.4" stroke="#4a4a4a" stroke-width="1.05"/><circle cx="1412.9" cy="186.2" r="16.7" stroke="#4a4a4a" stroke-width="1.05"/><path d="M1469.1,158.8 H1496.4 V172.3 H1510.4 V200.2 H1496.4 V213.6 H1469.1 V200.2 H1455 V172.3 H1469.1 Z" stroke="#4a4a4a" stroke-width="1.05"/><path d="M1548.1,181.2 L1548.1,169.7 L1542.9,169.7 L1553.3,159.1 L1563.7,169.7 L1558.5,169.7 L1558.5,181.2 L1558.5,181.2 L1570.0,181.2 L1570.0,176.0 L1580.6,186.4 L1570.0,196.8 L1570.0,191.6 L1558.5,191.6 L1558.5,191.6 L1558.5,203.1 L1563.7,203.1 L1553.3,213.7 L1542.9,203.1 L1548.1,203.1 L1548.1,191.6 L1548.1,191.6 L1536.6,191.6 L1536.6,196.8 L1526.0,186.4 L1536.6,176.0 L1536.6,181.2 L1548.1,181.2 Z" stroke="#4a4a4a" stroke-width="1.05"/><path d="M1385.2,264.8 L1396.1,253.6 V259.5 H1428.9 V253.6 L1440.3,264.8 L1428.9,276 V270 H1396.1 V276 Z" stroke="#4a4a4a" stroke-width="1.05"/><path d="M1483.0,238.7 L1489.5,258.6 L1510.4,258.6 L1493.5,270.9 L1499.9,290.8 L1483.0,278.5 L1466.1,290.8 L1472.5,270.9 L1455.6,258.6 L1476.5,258.6 Z" stroke="#4a4a4a" stroke-width="1.05"/><path d="M1553.1,289.5 C1546,282 1534,273 1528.4,264 C1523,255 1525.6,243.6 1535,240.2 C1542,237.8 1549.4,240.4 1553.1,246.2 C1556.8,240.4 1564.2,237.8 1571.2,240.2 C1580.6,243.6 1583.2,255 1577.8,264 C1572.2,273 1560.2,282 1553.1,289.5 Z" stroke="#4a4a4a" stroke-width="1.05"/><path d="M1414.2,344.6 L1414.3,344.9 L1414.3,345.2 L1414.3,345.6 L1414.3,345.9 L1414.2,346.3 L1414.2,346.7 L1414.0,347.0 L1413.8,347.4 L1413.6,347.7 L1413.4,348.0 L1413.1,348.3 L1412.7,348.6 L1412.4,348.8 L1412.0,349.0 L1411.6,349.2 L1411.1,349.3 L1410.6,349.4 L1410.2,349.5 L1409.7,349.5 L1409.2,349.4 L1408.7,349.3 L1408.2,349.1 L1407.7,348.9 L1407.2,348.6 L1406.8,348.3 L1406.4,348.0 L1406.0,347.6 L1405.6,347.1 L1405.3,346.6 L1405.1,346.1 L1404.9,345.5 L1404.7,344.9 L1404.6,344.3 L1404.6,343.7 L1404.6,343.0 L1404.7,342.4 L1404.8,341.7 L1405.1,341.1 L1405.3,340.5 L1405.7,339.9 L1406.1,339.3 L1406.6,338.8 L1407.1,338.3 L1407.7,337.9 L1408.3,337.5 L1409.0,337.2 L1409.7,336.9 L1410.4,336.7 L1411.2,336.6 L1412.0,336.6 L1412.8,336.6 L1413.6,336.7 L1414.3,336.9 L1415.1,337.2 L1415.9,337.6 L1416.6,338.0 L1417.3,338.5 L1417.9,339.1 L1418.5,339.7 L1419.0,340.4 L1419.5,341.2 L1419.9,342.0 L1420.2,342.8 L1420.4,343.7 L1420.5,344.6 L1420.6,345.5 L1420.5,346.5 L1420.4,347.4 L1420.2,348.3 L1419.9,349.3 L1419.5,350.1 L1419.0,351.0 L1418.4,351.8 L1417.7,352.6 L1417.0,353.3 L1416.2,353.9 L1415.3,354.4 L1414.3,354.9 L1413.4,355.2 L1412.3,355.5 L1411.3,355.7 L1410.2,355.8 L1409.1,355.7 L1408.0,355.6 L1406.9,355.3 L1405.9,355.0 L1404.8,354.5 L1403.8,354.0 L1402.9,353.3 L1402.0,352.5 L1401.2,351.7 L1400.5,350.8 L1399.9,349.8 L1399.3,348.7 L1398.9,347.6 L1398.6,346.4 L1398.4,345.2 L1398.3,344.0 L1398.3,342.7 L1398.4,341.5 L1398.7,340.3 L1399.1,339.1 L1399.6,337.9 L1400.2,336.8 L1400.9,335.7 L1401.8,334.7 L1402.7,333.8 L1403.8,332.9 L1404.9,332.2 L1406.1,331.6 L1407.3,331.1 L1408.6,330.7 L1410.0,330.4 L1411.3,330.3 L1412.7,330.3 L1414.1,330.4 L1415.5,330.7 L1416.9,331.1 L1418.2,331.7 L1419.5,332.3 L1420.7,333.1 L1421.8,334.0 L1422.9,335.1 L1423.8,336.2 L1424.6,337.4 L1425.4,338.8 L1425.9,340.1 L1426.4,341.6 L1426.7,343.1 L1426.9,344.6 L1426.9,346.1 L1426.8,347.7 L1426.5,349.2 L1426.1,350.7 L1425.5,352.2 L1424.8,353.6 L1423.9,355.0 L1422.9,356.2 L1421.8,357.4 L1420.6,358.5 L1419.2,359.4 L1417.8,360.2 L1416.3,360.9 L1414.7,361.5 L1413.1,361.8 L1411.4,362.0 L1409.7,362.1 L1408.0,362.0 L1406.3,361.7 L1404.7,361.3 L1403.0,360.7 L1401.5,359.9 L1400.0,359.0 L1398.6,358.0 L1397.3,356.8 L1396.1,355.4 L1395.0,354.0 L1394.1,352.4 L1393.3,350.8 L1392.7,349.1 L1392.3,347.3 L1392.0,345.5 L1391.9,343.7 L1392.0,341.8 L1392.2,340.0 L1392.7,338.2 L1393.3,336.4 L1394.1,334.7 L1395.1,333.0 L1396.2,331.5 L1397.4,330.0 L1398.9,328.7 L1400.4,327.5 L1402.1,326.5 L1403.8,325.6 L1405.6,324.9 L1407.6,324.4 L1409.5,324.1 L1411.5,323.9 L1413.5,324.0 L1415.5,324.2 L1417.5,324.7 L1419.4,325.3 L1421.3,326.1 L1423.1,327.1 L1424.8,328.3 L1426.4,329.6 L1427.8,331.1 L1429.1,332.7 L1430.3,334.5 L1431.2,336.4 L1432.0,338.3 L1432.6,340.4 L1433.0,342.5 L1433.2,344.6 L1433.2,346.8 L1433.0,348.9 L1432.6,351.0 L1432.0,353.1 L1431.1,355.2 L1430.1,357.1 L1428.9,359.0 L1427.5,360.7 L1425.9,362.3 L1424.2,363.7 L1422.3,365.0 L1420.4,366.1 L1418.3,367.0 L1416.1,367.7 L1413.9,368.1 L1411.6,368.4 L1409.3,368.4 L1407.0,368.3 L1404.7,367.9 L1402.4,367.2 L1400.2,366.4 L1398.1,365.3 L1396.1,364.1 L1394.3,362.6 L1392.5,361.0 L1390.9,359.2 L1389.6,357.2 L1388.3,355.1 L1387.3,352.9 L1386.6,350.6 L1386.0,348.3 L1385.7,345.8 L1385.6,343.4 L1385.7,340.9 L1386.1,338.5 L1386.7,336.0 L1387.5,333.7 L1388.6,331.4 L1389.9,329.3 L1391.4,327.3 L1393.1,325.4 L1395.0,323.7 L1397.0,322.1 L1399.2,320.8 L1401.6,319.7 L1404.0,318.8 L1406.5,318.1 L1409.0,317.7 L1411.7,317.6 L1414.3,317.7 L1416.9,318.0 L1419.4,318.6 L1422.0,319.5 L1424.4,320.5 L1426.7,321.9 L1428.9,323.4 L1430.9,325.2 L1432.8,327.1 L1434.4,329.2 L1435.9,331.5 L1437.1,334.0 L1438.1,336.5 L1438.9,339.1 L1439.4,341.8 L1439.6,344.6" stroke="#4a4a4a" stroke-width="1.05"/><path d="M1483.0,315.9 L1489.7,331.7 L1506.7,329.6 L1496.4,343.3 L1506.7,357.0 L1489.7,354.9 L1483.0,370.7 L1476.3,354.9 L1459.3,357.0 L1469.6,343.3 L1459.3,329.6 L1476.3,331.7 Z" stroke="#4a4a4a" stroke-width="1.05"/><path d="M1543.8,318.6 H1580.6 L1562.4,367.9 H1525.6 Z" stroke="#4a4a4a" stroke-width="1.05"/></svg><div class="t" style="left:1412.5px;top:147.7px;font-size:9px;color:#111;font-weight:700;transform:translate(-50%,-50%);">箭头</div><div class="t" style="left:1483px;top:147.7px;font-size:9px;color:#111;font-weight:700;transform:translate(-50%,-50%);">箭头1</div><div class="t" style="left:1553.2px;top:147.7px;font-size:9px;color:#111;font-weight:700;transform:translate(-50%,-50%);">箭头2</div><div class="t" style="left:1412.9px;top:225.8px;font-size:9px;color:#111;font-weight:700;transform:translate(-50%,-50%);">同心圆</div><div class="t" style="left:1483px;top:225.8px;font-size:9px;color:#111;font-weight:700;transform:translate(-50%,-50%);">十字</div><div class="t" style="left:1553.3px;top:225.8px;font-size:9px;color:#111;font-weight:700;transform:translate(-50%,-50%);">十字箭头</div><div class="t" style="left:1412.8px;top:304.4px;font-size:9px;color:#111;font-weight:700;transform:translate(-50%,-50%);">双箭头</div><div class="t" style="left:1483px;top:304.4px;font-size:9px;color:#111;font-weight:700;transform:translate(-50%,-50%);">五角星</div><div class="t" style="left:1553.1px;top:304.4px;font-size:9px;color:#111;font-weight:700;transform:translate(-50%,-50%);">心形</div><div class="b" style="left:1370px;top:370px;width:225px;height:10.6px;overflow:hidden"><div class="t" style="left:42.799999999999955px;top:13.2px;font-size:9px;color:#111;font-weight:700;transform:translate(-50%,-50%);">螺旋线</div><div class="t" style="left:113px;top:13.2px;font-size:9px;color:#111;font-weight:700;transform:translate(-50%,-50%);">六角星</div><div class="t" style="left:183.0999999999999px;top:13.2px;font-size:9px;color:#111;font-weight:700;transform:translate(-50%,-50%);">平行四边形</div></div><div class="b" style="left:1380px;top:426px;width:218.4px;height:33.4px;background:#057ec9;border-radius:5px 5px 0 0"></div><div class="b" style="left:1380px;top:459.4px;width:218.4px;height:66.8px;background:#ebebeb"></div><div class="t" style="left:1410.9px;top:443.6px;font-size:12px;color:#fff;font-weight:500;transform:translate(-50%,-50%);">加工工艺</div><div class="t" style="left:1467px;top:443.6px;font-size:12px;color:#fff;font-weight:500;transform:translate(-50%,-50%);">速度</div><div class="t" style="left:1519px;top:443.6px;font-size:12px;color:#fff;font-weight:500;transform:translate(-50%,-50%);">功率</div><div class="t" style="left:1572.2px;top:443.6px;font-size:12px;color:#fff;font-weight:500;transform:translate(-50%,-50%);">输出</div><div class="b" style="left:1382.8px;top:469.0px;width:15px;height:15px;background:#c13026;border-radius:2px"></div><div class="t" style="left:1415px;top:476.7px;font-size:12px;color:#111;font-weight:500;transform:translate(-50%,-50%);">切割</div><div class="t" style="left:1467px;top:476.9px;font-size:12.6px;color:#666;font-weight:400;transform:translate(-50%,-50%);-webkit-text-stroke:0.2px #666">5.0</div><div class="t" style="left:1519px;top:476.9px;font-size:12.6px;color:#666;font-weight:400;transform:translate(-50%,-50%);-webkit-text-stroke:0.2px #666;letter-spacing:0.5px">99.0</div><div class="b" style="left:1382.8px;top:502.5px;width:15px;height:15px;background:#fff884;border-radius:2px"></div><div class="t" style="left:1415px;top:510.2px;font-size:12px;color:#111;font-weight:500;transform:translate(-50%,-50%);">切割</div><div class="t" style="left:1467px;top:510.4px;font-size:12.6px;color:#666;font-weight:400;transform:translate(-50%,-50%);-webkit-text-stroke:0.2px #666">5.0</div><div class="t" style="left:1519px;top:510.4px;font-size:12.6px;color:#666;font-weight:400;transform:translate(-50%,-50%);-webkit-text-stroke:0.2px #666;letter-spacing:0.5px">99.0</div><div class="b" style="left:1380.6px;top:785.8px;width:224px;height:24px;background:#d9d9d9;border:1px solid #c9c9c9;border-radius:2px 0 0 2px"></div><div class="b" style="left:1382px;top:787.2px;width:159.4px;height:21.2px;background:#fff"></div><svg width="1600" height="823" viewBox="0 0 1600 823" fill="none"><path d="M1564.2,475.9 C1567.4,467.5 1578.6,467.5 1581.8,475.9 C1578.6,484.29999999999995 1567.4,484.29999999999995 1564.2,475.9 Z" stroke="#111" stroke-width="1.3"/><circle cx="1573" cy="475.9" r="4.4" stroke="#111" stroke-width="1.5"/><path d="M1564.2,509.4 C1567.4,501.0 1578.6,501.0 1581.8,509.4 C1578.6,517.8 1567.4,517.8 1564.2,509.4 Z" stroke="#111" stroke-width="1.3"/><circle cx="1573" cy="509.4" r="4.4" stroke="#111" stroke-width="1.5"/><circle cx="1483.8" cy="719.2" r="52.2" stroke="#057ec9" stroke-width="3.2"/><circle cx="1483.8" cy="719.2" r="45.6" fill="#057ec9"/><circle cx="1441" cy="798.6" r="5.8" stroke="#e8842c" stroke-width="1.2"/><path d="M1438.6,796.2 L1443.4,801 M1443.4,796.2 L1438.6,801" stroke="#e8842c" stroke-width="1.2"/><defs><linearGradient id="gg" x1="0" y1="0" x2="0" y2="1"><stop offset="0" stop-color="#27b24f"/><stop offset="1" stop-color="#83e07c"/></linearGradient></defs><rect x="1595.6" y="675" width="6" height="49" fill="url(#gg)" stroke="#2a7de1" stroke-width="1"/><rect x="1596.1" y="675.5" width="6" height="5" fill="#333a44"/><rect x="1596.6" y="778" width="6" height="46" rx="1.5" fill="#2a9fe0"/><rect x="1596.6" y="778" width="6" height="18" rx="1.5" fill="#5a6875"/></svg><div class="t" style="left:1482.6px;top:721.8px;font-size:24.8px;color:#fff;font-weight:500;transform:translate(-50%,-50%);">开始</div><div class="t" style="left:1471.4px;top:799px;font-size:12.2px;color:#e8842c;font-weight:400;transform:translate(-50%,-50%);">未连接</div><div class="t" style="left:1569.9px;top:799px;font-size:12px;color:#111;font-weight:700;transform:translate(-50%,-50%);">切换</div>
</body></html>
